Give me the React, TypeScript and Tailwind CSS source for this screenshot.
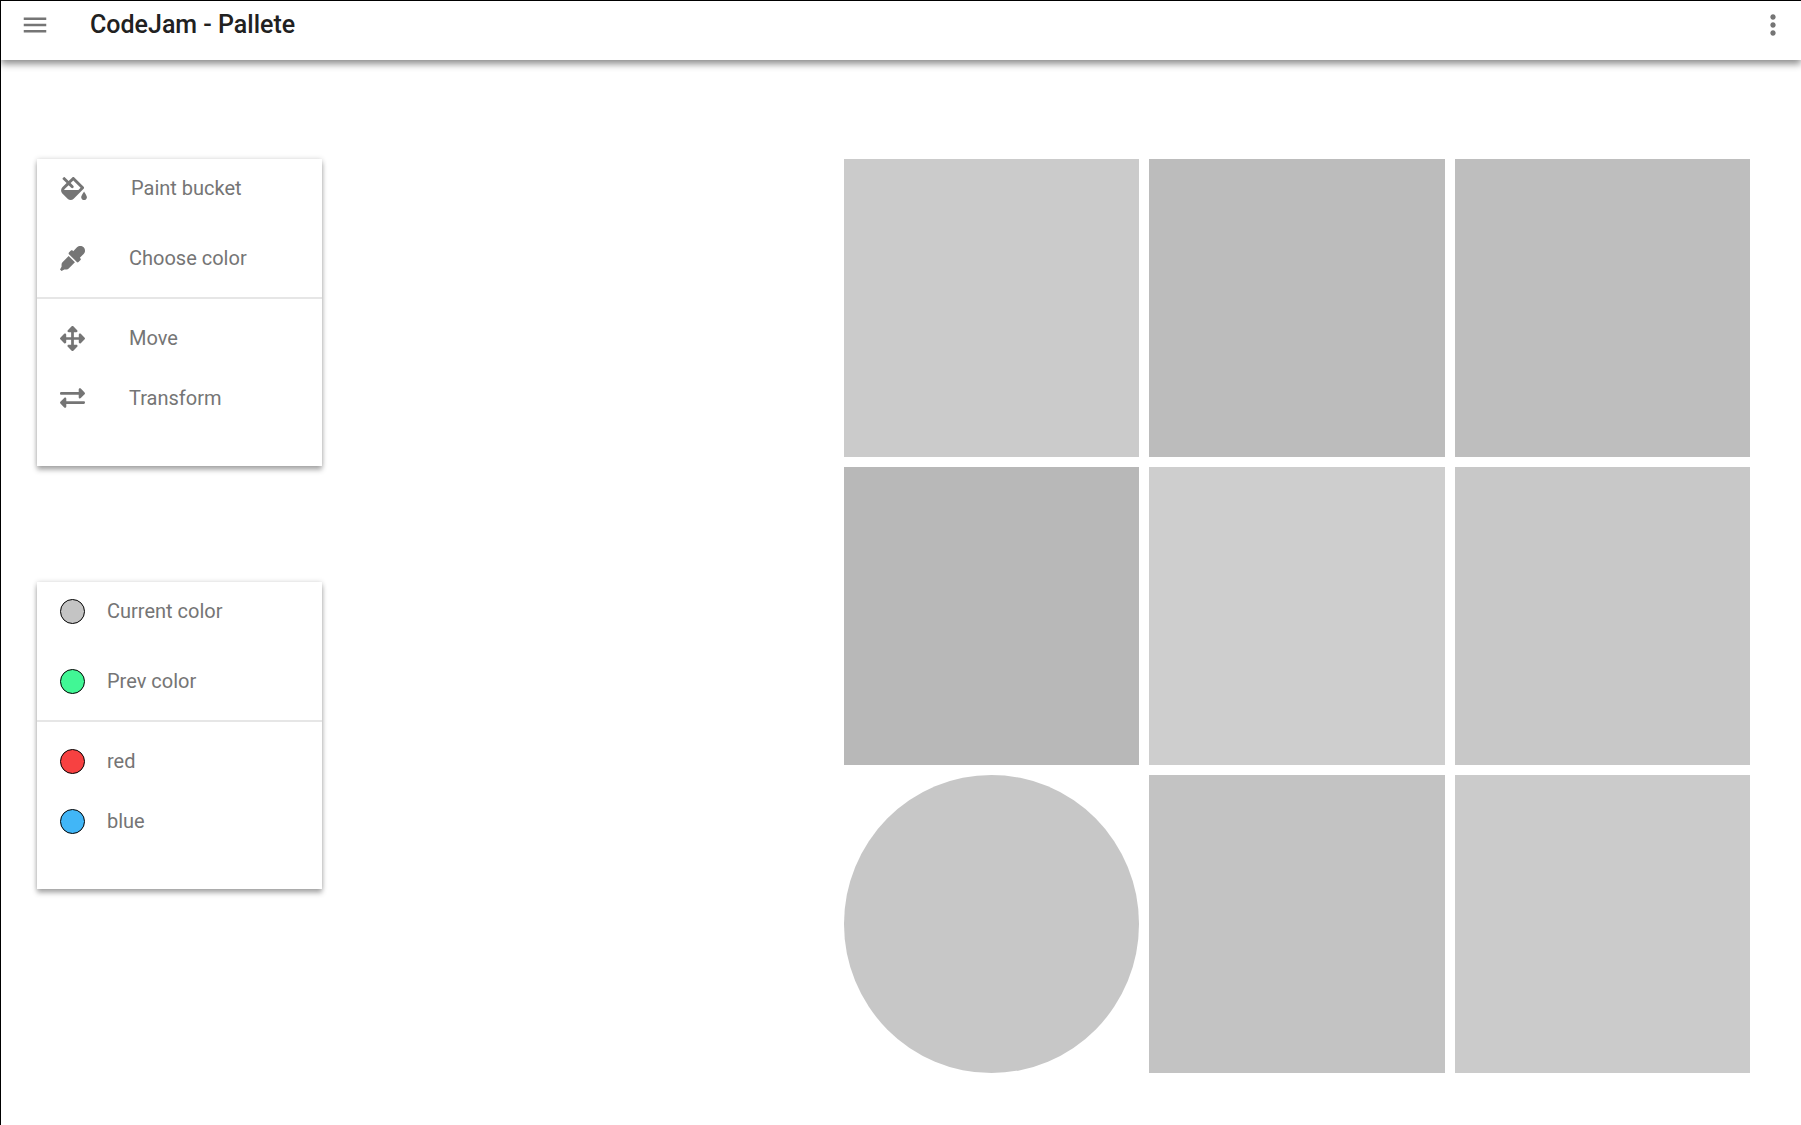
import type { ReactNode } from "react";
import { FaArrowsAlt, FaEyeDropper, FaFillDrip } from "react-icons/fa";
import { MdMenu, MdMoreVert } from "react-icons/md";

function SwapArrows() {
  return (
    <svg viewBox="0 0 25 20" fill="currentColor" className="h-5 w-[25px]" aria-hidden="true">
      <path d="M1.2 4H18.7V1.4C18.7.3 20 -.3 20.8.6L24.6 4.5C25.1 5 25.1 5.8 24.6 6.3L20.8 10.1C20 10.9 18.7 10.4 18.7 9.2V6.7H1.2C.5 6.7 0 6.2 0 5.4C0 4.6.5 4 1.2 4Z" />
      <path d="M23.8 13.3H6.3V10.8C6.3 9.6 5 9.1 4.2 9.9L.4 13.7C-.1 14.2-.1 15 .4 15.5L4.2 19.4C5 20.3 6.3 19.7 6.3 18.6V16H23.8C24.5 16 25 15.4 25 14.6C25 13.8 24.5 13.3 23.8 13.3Z" />
    </svg>
  );
}

function Row({ icon, label, gap }: { icon: ReactNode; label: string; gap: string }) {
  return (
    <li>
      <button type="button" className={`flex h-[30px] w-full items-center pl-[23px] text-left text-xl text-[#757575] ${gap}`}>
        {icon}
        <span>{label}</span>
      </button>
    </li>
  );
}

function Dot({ color }: { color: string }) {
  return <span className={`size-[25px] shrink-0 rounded-full border border-black ${color}`} />;
}

function Card({ label, top, bottom }: { label: string; top: ReactNode; bottom: ReactNode }) {
  return (
    <section aria-label={label} className="bg-white pt-[14px] pb-[53px] shadow-[0_4px_5px_rgba(0,0,0,0.3),0_0_5px_rgba(0,0,0,0.16)]">
      <ul className="flex flex-col gap-10 pb-6">{top}</ul>
      <hr className="border-t-2 border-[#e6e6e6]" />
      <ul className="flex flex-col gap-[30px] pt-6">{bottom}</ul>
    </section>
  );
}

const cells = [
  "bg-[#cbcbcb]",
  "bg-[#bcbcbc]",
  "bg-[#bebebe]",
  "bg-[#b8b8b8]",
  "bg-[#cecece]",
  "bg-[#c8c8c8]",
  "bg-[#c7c7c7] rounded-[50%]",
  "bg-[#c3c3c3]",
  "bg-[#cbcbcb]",
];

export default function App() {
  return (
    <div className="min-h-screen border-t border-l border-black bg-white font-['Roboto',sans-serif]">
      <header className="flex h-[59px] items-start justify-between pt-2 pr-3 pl-[19px] shadow-[0_4px_7px_rgba(0,0,0,0.45)]">
        <div className="flex items-center gap-10">
          <button type="button" aria-label="Menu" className="text-[#757575]">
            <MdMenu className="size-[30px]" />
          </button>
          <h1 className="text-[25px] leading-8 font-medium text-[#212121]">CodeJam - Pallete</h1>
        </div>
        <button type="button" aria-label="More options" className="text-[#757575]">
          <MdMoreVert className="size-8" />
        </button>
      </header>
      <main className="flex items-start justify-between pt-[99px] pr-[51px] pb-[52px] pl-9">
        <aside className="flex w-[285px] flex-col gap-[116px]">
          <Card
            label="Tools"
            top={
              <>
                <Row gap="gap-11" icon={<FaFillDrip className="ml-px h-[23px] w-[26px]" />} label="Paint bucket" />
                <Row gap="gap-11" icon={<FaEyeDropper className="size-[25px]" />} label="Choose color" />
              </>
            }
            bottom={
              <>
                <Row gap="gap-11" icon={<FaArrowsAlt className="size-[25px]" />} label="Move" />
                <Row gap="gap-11" icon={<SwapArrows />} label="Transform" />
              </>
            }
          />
          <Card
            label="Colors"
            top={
              <>
                <Row gap="gap-[22px]" icon={<Dot color="bg-[#c4c4c4]" />} label="Current color" />
                <Row gap="gap-[22px]" icon={<Dot color="bg-[#41f795]" />} label="Prev color" />
              </>
            }
            bottom={
              <>
                <Row gap="gap-[22px]" icon={<Dot color="bg-[#f74141]" />} label="red" />
                <Row gap="gap-[22px]" icon={<Dot color="bg-[#41b6f7]" />} label="blue" />
              </>
            }
          />
        </aside>
        <div className="grid w-[906px] grid-cols-3 gap-[10px]">
          {cells.map((cell, i) => (
            <div key={i} className={`h-[298px] ${cell}`} />
          ))}
        </div>
      </main>
    </div>
  );
}
